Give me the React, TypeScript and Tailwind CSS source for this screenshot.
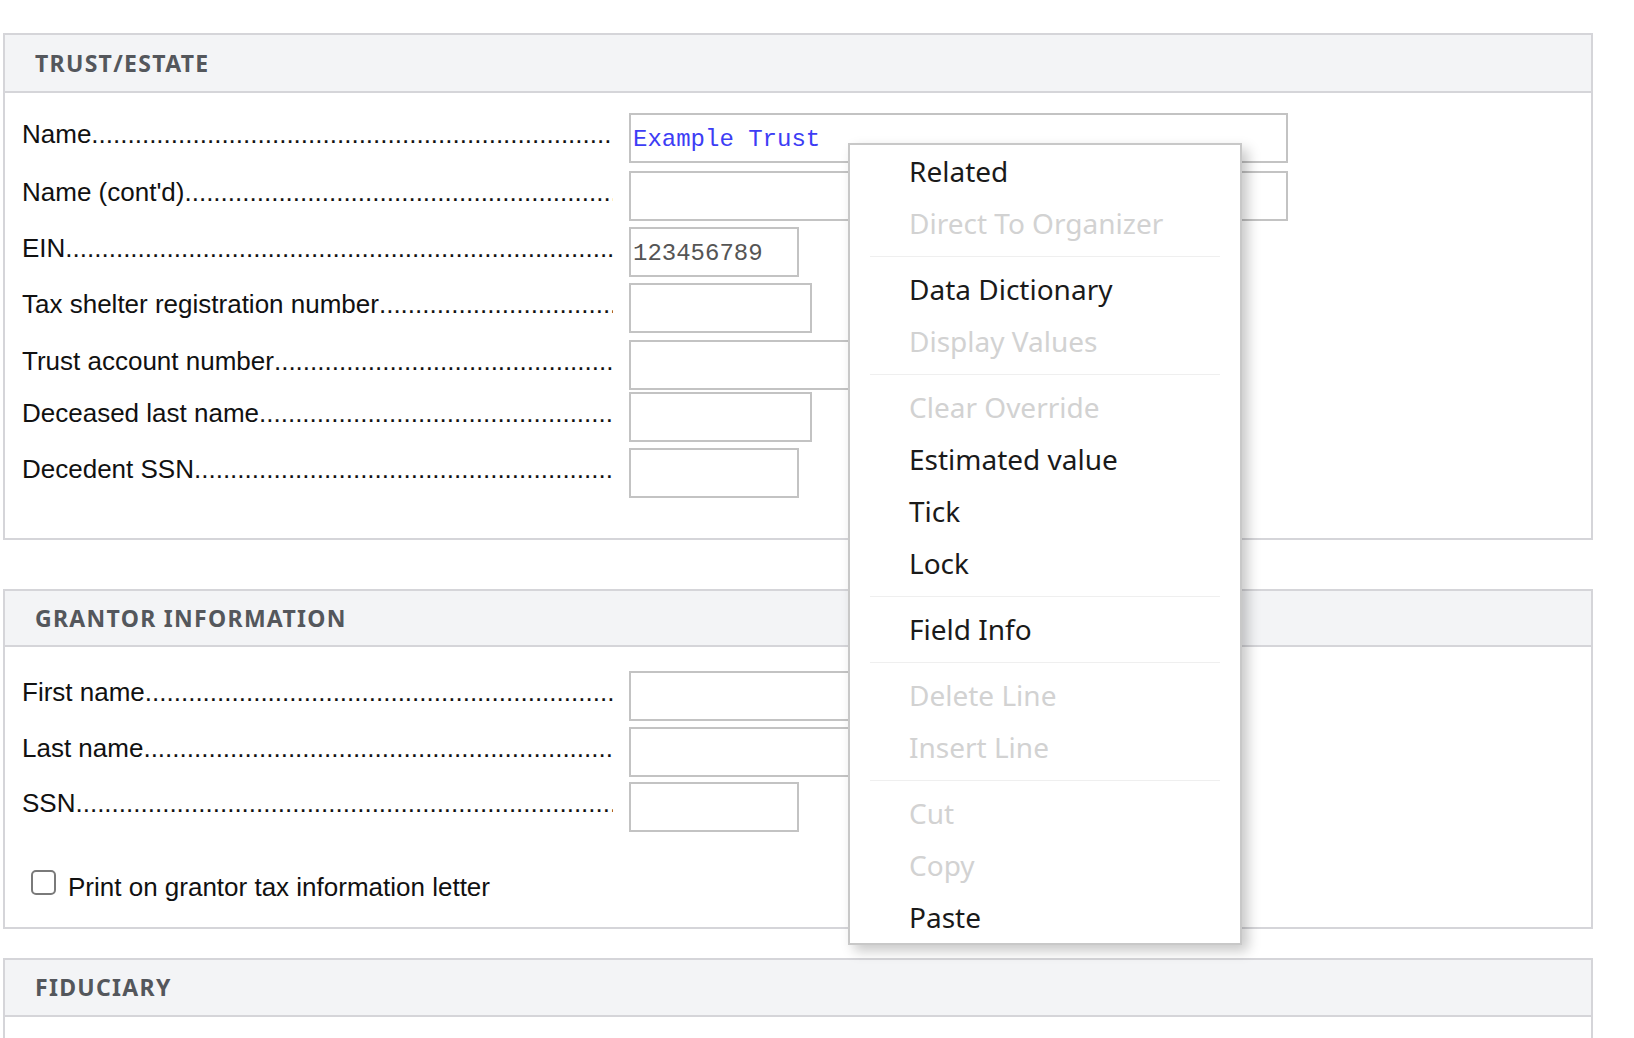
import React from 'react'

const DOTS = '.'.repeat(160)

type Field = {
  label: string
  width: string
  gap: string
  value?: string
  tone?: 'blue' | 'gray'
}

const TRUST_FIELDS: Field[] = [
  { label: 'Name', width: 'w-[659px]', gap: 'mt-[20px]', value: 'Example Trust', tone: 'blue' },
  { label: "Name (cont'd)", width: 'w-[659px]', gap: 'mt-[8px]' },
  { label: 'EIN', width: 'w-[170px]', gap: 'mt-[6px]', value: '123456789', tone: 'gray' },
  { label: 'Tax shelter registration number', width: 'w-[183px]', gap: 'mt-[6px]' },
  { label: 'Trust account number', width: 'w-[420px]', gap: 'mt-[7px]' },
  { label: 'Deceased last name', width: 'w-[183px]', gap: 'mt-[2px]' },
  { label: 'Decedent SSN', width: 'w-[170px]', gap: 'mt-[6px]' },
]

const GRANTOR_FIELDS: Field[] = [
  { label: 'First name', width: 'w-[420px]', gap: 'mt-[24px]' },
  { label: 'Last name', width: 'w-[420px]', gap: 'mt-[6px]' },
  { label: 'SSN', width: 'w-[170px]', gap: 'mt-[5px]' },
]

type MenuEntry = { label: string; disabled?: boolean } | 'sep'

const MENU: MenuEntry[] = [
  { label: 'Related' },
  { label: 'Direct To Organizer', disabled: true },
  'sep',
  { label: 'Data Dictionary' },
  { label: 'Display Values', disabled: true },
  'sep',
  { label: 'Clear Override', disabled: true },
  { label: 'Estimated value' },
  { label: 'Tick' },
  { label: 'Lock' },
  'sep',
  { label: 'Field Info' },
  'sep',
  { label: 'Delete Line', disabled: true },
  { label: 'Insert Line', disabled: true },
  'sep',
  { label: 'Cut', disabled: true },
  { label: 'Copy', disabled: true },
  { label: 'Paste' },
]

function FieldRow({ field }: { field: Field }) {
  return (
    <div className={`flex items-start ${field.gap}`}>
      <div className="flex w-[591px] overflow-hidden whitespace-nowrap pt-[6px] font-['Liberation_Sans',Arial,sans-serif] text-[26px] leading-[30px] text-[#111111]">
        <span className="shrink-0">{field.label}</span>
        <span className="min-w-0 flex-1 overflow-hidden">{DOTS}</span>
      </div>
      <input
        readOnly
        value={field.value ?? ''}
        className={`ml-[16px] h-[50px] ${field.width} border-2 border-[#c3c3c3] bg-white px-[2px] pt-[3px] font-['Liberation_Mono','Courier_New',monospace] text-[24px] outline-none ${
          field.tone === 'blue' ? 'text-[#3d3df5]' : 'text-[#555555]'
        }`}
      />
    </div>
  )
}

function SectionHeader({ title, height }: { title: string; height: string }) {
  return (
    <div className={`flex ${height} items-center border-b-2 border-[#d5d5d9] bg-[#f3f4f6] pl-[30px]`}>
      <h2 className="font-['Noto_Sans',sans-serif] text-[23px] font-bold leading-none tracking-[1.3px] text-[#54575c]">
        {title}
      </h2>
    </div>
  )
}

function ContextMenu() {
  return (
    <div className="absolute left-[848px] top-[143px] w-[394px] border-2 border-[#c8c8c8] bg-white shadow-[6px_6px_12px_rgba(0,0,0,0.22)]">
      {MENU.map((entry, i) =>
        entry === 'sep' ? (
          <div key={i} className="pb-[6px] pt-[7px]">
            <div className="mx-[20px] h-px bg-[#efefef]" />
          </div>
        ) : (
          <div
            key={i}
            className={`h-[52px] whitespace-nowrap pl-[59px] font-['Noto_Sans',sans-serif] text-[28px] leading-[52px] ${
              entry.disabled ? 'text-[#d2d2d2]' : 'text-[#1a1a1a]'
            }`}
          >
            {entry.label}
          </div>
        ),
      )}
    </div>
  )
}

export default function App() {
  return (
    <div className="relative h-[1038px] w-[1634px] overflow-hidden bg-white pl-[3px] pt-[33px]">
      {/* Trust / estate */}
      <section className="w-[1590px] border-2 border-[#d5d5d9]">
        <SectionHeader title="TRUST/ESTATE" height="h-[58px]" />
        <div className="pb-[40px] pl-[17px]">
          {TRUST_FIELDS.map((f) => (
            <FieldRow key={f.label} field={f} />
          ))}
        </div>
      </section>

      {/* Grantor */}
      <section className="mt-[49px] w-[1590px] border-2 border-[#d5d5d9]">
        <SectionHeader title="GRANTOR INFORMATION" height="h-[56px]" />
        <div className="pb-[25px] pl-[17px]">
          {GRANTOR_FIELDS.map((f) => (
            <FieldRow key={f.label} field={f} />
          ))}
          <label className="ml-[9px] mt-[38px] flex items-start">
            <span className="h-[25px] w-[25px] shrink-0 rounded-[5px] border-2 border-[#7a7a7a] bg-white" />
            <span className="ml-[12px] pt-[2px] font-['Liberation_Sans',Arial,sans-serif] text-[26px] leading-[30px] text-[#111111]">
              Print on grantor tax information letter
            </span>
          </label>
        </div>
      </section>

      {/* Fiduciary */}
      <section className="mt-[29px] w-[1590px] border-2 border-[#d5d5d9]">
        <SectionHeader title="FIDUCIARY" height="h-[57px]" />
        <div className="h-[200px]" />
      </section>

      <ContextMenu />
    </div>
  )
}
